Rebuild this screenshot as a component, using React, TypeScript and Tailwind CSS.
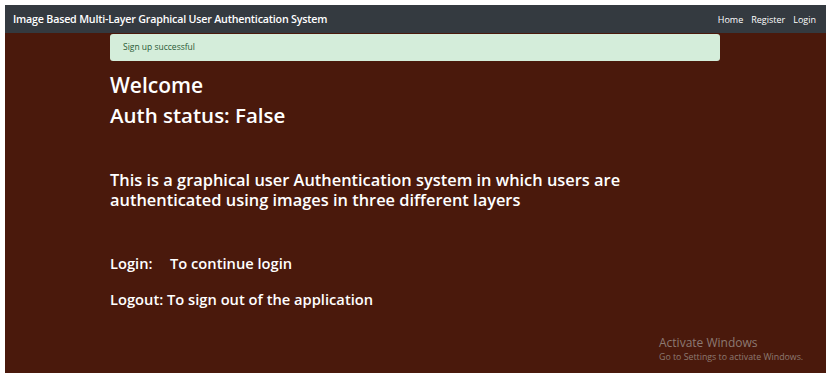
export default function App() {
  return (
    <div className="w-[832px] h-[382px] bg-white pt-[5px] pl-[5px]" style={{ fontFamily: '"Open Sans", "Noto Sans", sans-serif' }}>
      <div className="w-[821px] h-[368px] bg-[#4a190c] flex flex-col">
        {/* NAVBAR */}
        <nav className="h-[28px] bg-[#343a40] flex items-center justify-between pl-[8px] pr-[10px]">
          <span className="text-white text-[10.7px] font-semibold tracking-[-0.2px]">
            Image Based Multi-Layer Graphical User Authentication System
          </span>
          <div className="flex items-center gap-[8px] text-white text-[9px] mt-[2px]">
            <span>Home</span>
            <span>Register</span>
            <span>Login</span>
          </div>
        </nav>

        <div className="pl-[105px] flex flex-col">
          {/* ALERT */}
          <div className="w-[610px] h-[27px] mt-[1px] bg-[#d4edda] rounded-[3px] flex items-center pl-[13px] text-[#2a5a36] text-[8.5px]">
            Sign up successful
          </div>

          <h1 className="text-white text-[21px] font-semibold leading-[30px] mt-[9px]">Welcome</h1>
          <h2 className="text-white text-[20.5px] font-semibold leading-[30px]">Auth status: False</h2>

          <p className="text-white text-[16.4px] font-semibold leading-[20px] mt-[40px] w-[560px]">
            This is a graphical user Authentication system in which users are authenticated using images in three different layers
          </p>

          <div className="text-white text-[14.7px] font-semibold mt-[42px] flex">
            <span className="w-[60px]">Login:</span>
            <span>To continue login</span>
          </div>
          <div className="text-white text-[14.7px] font-semibold mt-[14px]">
            Logout: To sign out of the application
          </div>
        </div>

        <div className="mt-auto mb-[10px] ml-[654px] text-[#8d7972]">
          <div className="text-[12px] leading-[16px]">Activate Windows</div>
          <div className="text-[8.8px] leading-[12px]">Go to Settings to activate Windows.</div>
        </div>
      </div>
    </div>
  );
}
